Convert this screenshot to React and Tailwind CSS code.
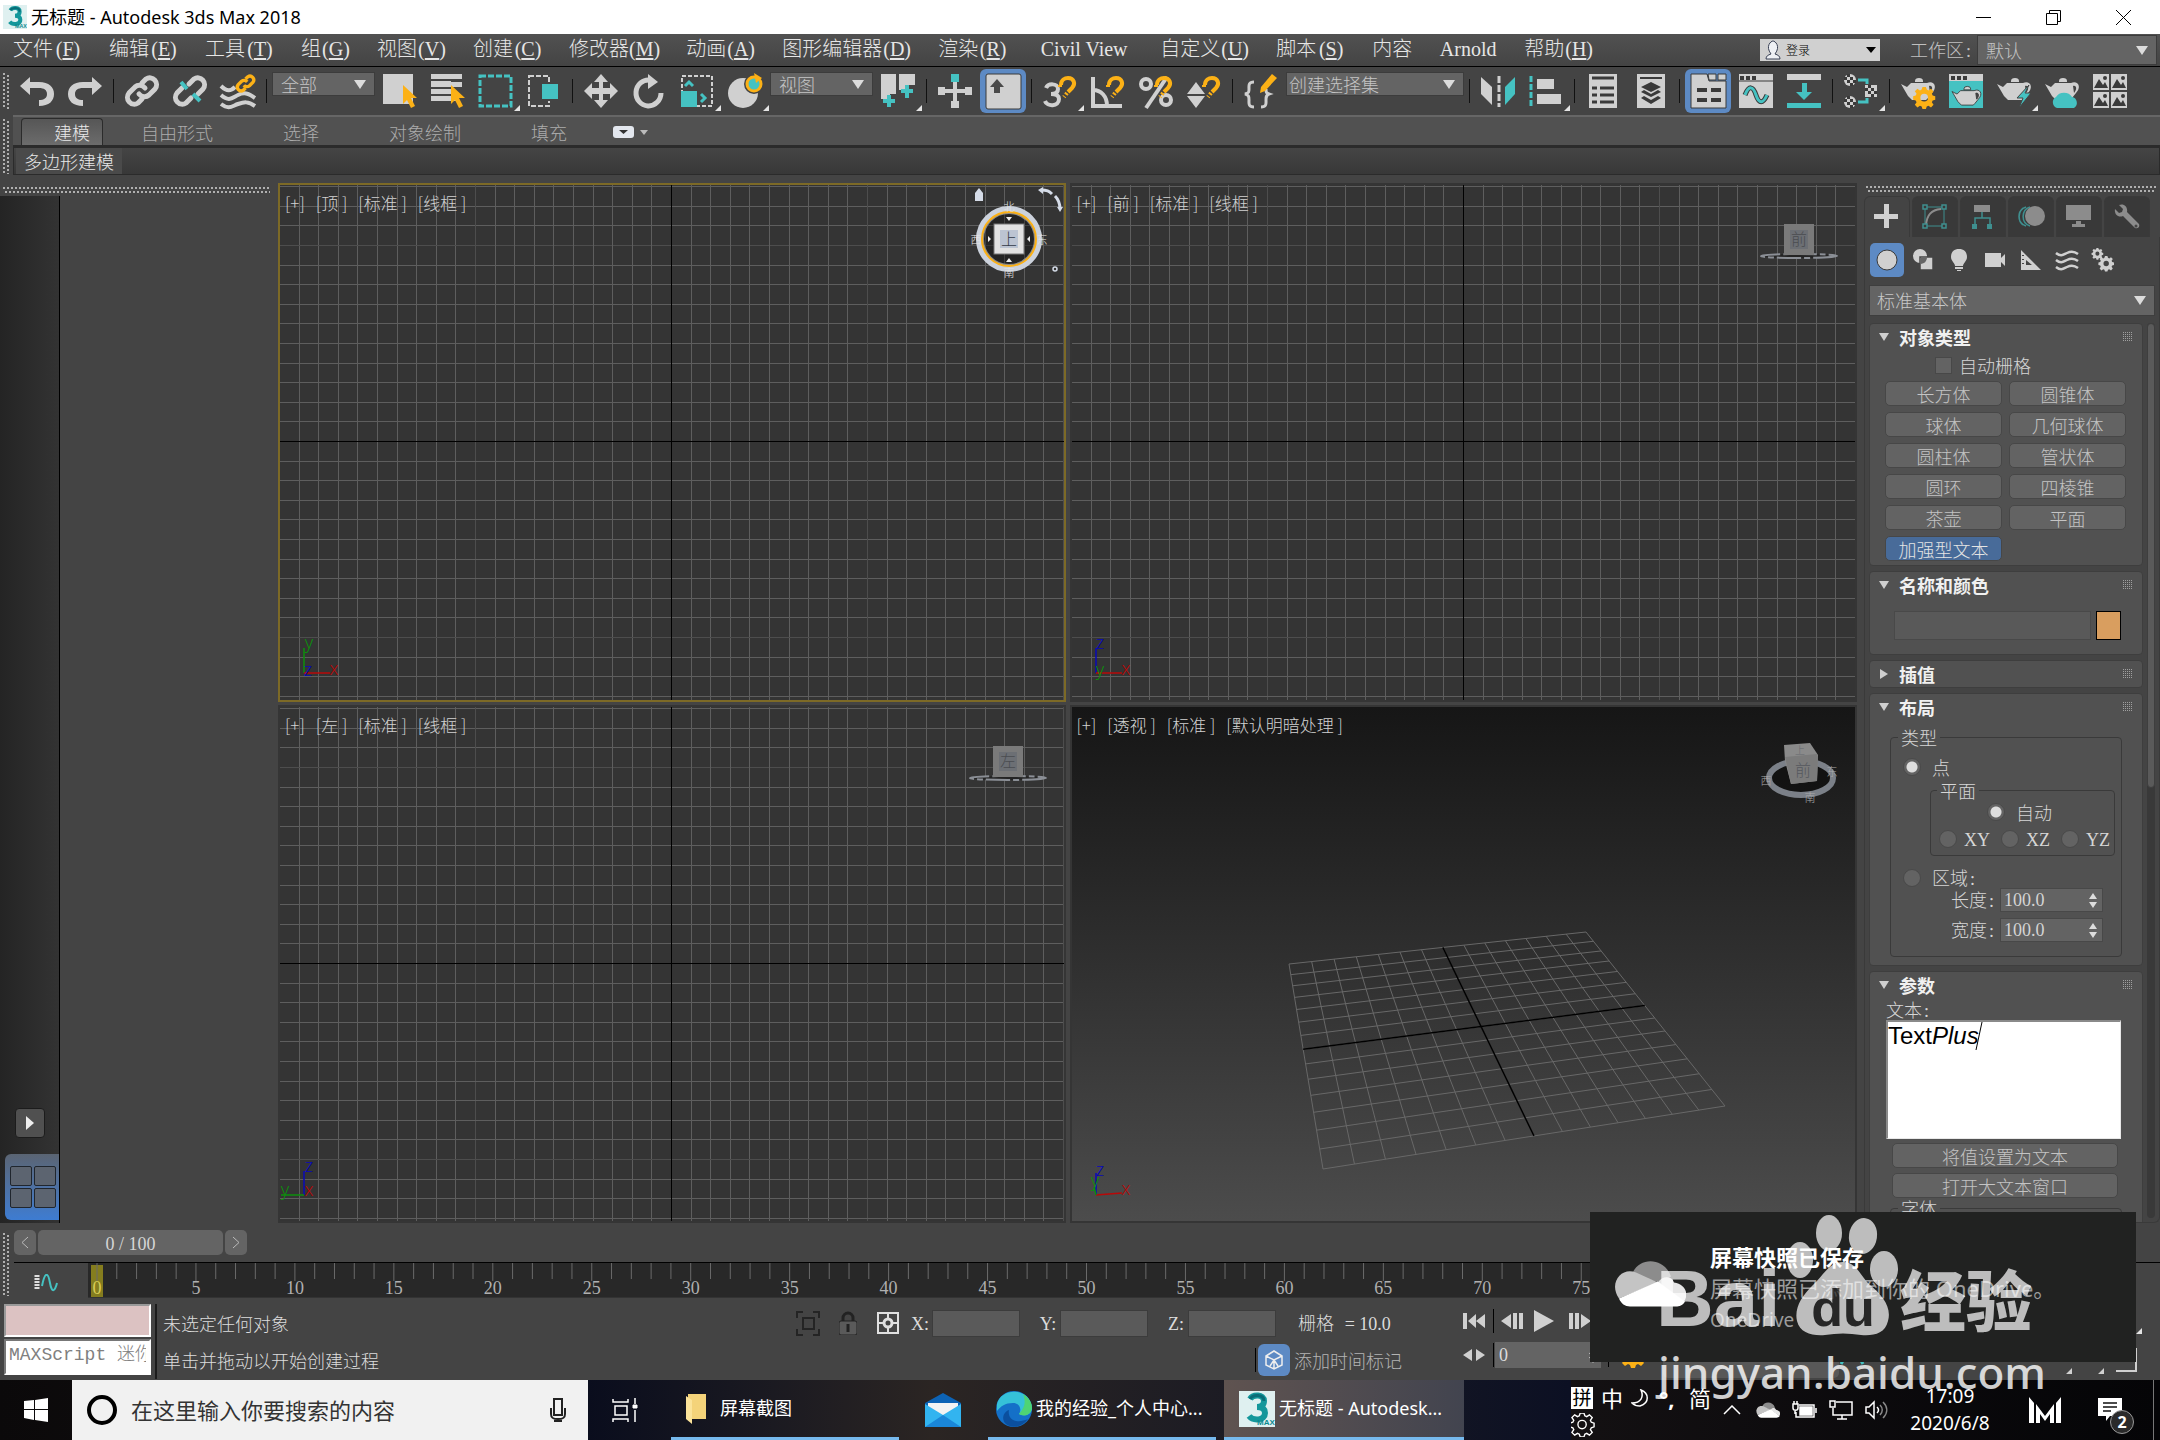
import React from "react";

const G = "#d0d0d0";
const T = "#45c2c2";
const O = "#fcb116";
const D = "#3a3a3a";

/* Latin runs are set in a serif face on half-width cells beside the Chinese text. */
function Song({ children, large, underline }) {
  const runs = String(children).match(/[\x20-\x7e]+|[^\x20-\x7e]+/g) || [];
  return runs.map((r, i) =>
    /^[\x20-\x7e]/.test(r) ? (
      <span
        key={i}
        className="inline-block text-center whitespace-pre font-['Liberation_Serif',serif]"
        style={{ minWidth: r.length * (large ? 10 : 9) }}
      >
        {underline && /^\(.\)$/.test(r) ? (
          <>
            (<u className="underline underline-offset-2">{r[1]}</u>)
          </>
        ) : (
          r
        )}
      </span>
    ) : (
      <span key={i}>{r}</span>
    )
  );
}

function Svg({ s = 34, vb, children, ...rest }) {
  return (
    <svg width={s} height={s} viewBox={vb || "0 0 34 34"} fill={G} aria-hidden="true" {...rest}>
      {children}
    </svg>
  );
}

/* ---------- toolbar drawings ---------- */
const undoPath = "M0 12 10 3v5h9c10 0 15 5 15 12s-5 12-15 12v-6c5 0 8-2 8-6s-3-6-8-6h-9v7z";
const chainA = "M14 20a7 7 0 0 0 10 1l6-6a6.800 6.800 0 0 0-9-10l-4 4";
const chainB = "M20 14a7 7 0 0 0-10-1l-6 6a6.800 6.800 0 0 0 9 10l4-4";
const cursor = "M0 0v19l4-4 4 8 4-2-4-8h6z";

const Magnet = ({ x = 15, y = 2 }) => (
  <g transform={`translate(${x} ${y})`} fill="none" stroke={O} strokeWidth="4">
    <path d="M3 9C3 4 7 2 10 2c6 0 8 6 4 10l-4 4" />
    <path d="M2 9v4M9 17l-3 4" strokeWidth="4" strokeDasharray="2 2" />
  </g>
);
const Pot = ({ children }) => (
  <>
    <path d="M14 7a4 3 0 0 1 8 0v1h-8zM0 10l6 3 4-4h16c7-3 11 4 5 10l-4 5-2 2H11L7 22z" />
    <path d="M28 12c4-1 4 4 1 7z" fill="#444" />
    {children}
  </>
);
const Mountain = ({ x, y }) => (
  <g transform={`translate(${x} ${y})`}>
    <rect width="16" height="16" />
    <path d="m1 14 5-9 4 6 2-3 3 6z" fill={D} />
    <circle cx="12" cy="4" r="2" fill={D} />
  </g>
);
const Checker = ({ x, y, round }) => (
  <g transform={`translate(${x} ${y})`}>
    {round ? <circle cx="6" cy="6" r="6" /> : <rect width="12" height="12" />}
    <path d="M3 0h3v3H3zM0 3h3v3H0zM6 3h3v3H6zM3 6h3v3H3zM9 6h3v3H9zM6 9h3v3H6z" fill={D} />
  </g>
);
const gearPath =
  "M10 0h4l1 3 2 1 3-2 3 3-2 3 1 2 3 1v4l-3 1-1 2 2 3-3 3-3-2-2 1-1 3h-4l-1-3-2-1-3 2-3-3 2-3-1-2-3-1v-4l3-1 1-2-2-3 3-3 3 2 2-1zM12 8a4 4 0 1 0 0 9 4 4 0 0 0 0-9z";

const icons = {
  undo: <path d={undoPath} />,
  redo: <path d={undoPath} transform="matrix(-1 0 0 1 34 0)" />,
  link: (
    <g fill="none" stroke={G} strokeWidth="5" strokeLinecap="round">
      <path d={chainA} />
      <path d={chainB} />
    </g>
  ),
  unlink: (
    <g fill="none" stroke={G} strokeWidth="5" strokeLinecap="round">
      <path d="M25 20l5-5a6.800 6.800 0 0 0-9-10l-5 5" />
      <path d="M9 14l-5 5a6.800 6.800 0 0 0 9 10l5-5" />
      <path d="m8 8 6 7M20 20l7 7" stroke={T} strokeWidth="4" strokeLinecap="butt" />
    </g>
  ),
  bind: (
    <g fill="none" stroke={G} strokeWidth="4">
      <path d="M0 12c6 6 10 5 14 1M0 21c8 7 11 3 17 0s10-2 17 3M0 30c8 6 11 2 17 0s10-3 17 2" />
      <g stroke={O} transform="translate(15 0) scale(.56)">
        <path d={chainA} strokeWidth="6" />
        <path d={chainB} strokeWidth="6" />
      </g>
    </g>
  ),
  select: (
    <>
      <path d="M0 0h30v30H0z" />
      <path d={cursor} fill={O} transform="translate(20 11)" />
    </>
  ),
  byName: (
    <>
      <path d="M0 0h31v5H0zM0 7h20v6H0zM20 8h11v5H20zM0 15h21v5H0zM0 22h27v5H0z" />
      <path d={cursor} fill={O} transform="translate(20 11)" />
    </>
  ),
  rect: <rect x="1" y="2" width="31" height="30" fill="none" stroke={T} strokeWidth="3" strokeDasharray="6 2" />,
  crossing: (
    <>
      <rect x="2" y="2" width="20" height="30" fill="none" stroke={G} strokeWidth="2" strokeDasharray="5 2" />
      <rect x="14" y="9" width="18" height="17" fill={T} stroke="#444" strokeWidth="2" />
    </>
  ),
  move: <path d="m17 0 7 8h-5v6h7V9l8 8-8 8v-5h-7v6h5l-7 8-7-8h5v-6H8v5l-8-8 8-8v5h7V8h-5z" />,
  rotate: (
    <>
      <path d="M18 6A12.500 13 0 1 0 29 19" fill="none" stroke={G} strokeWidth="5" />
      <path d="m16 0 10 8-10 7z" />
    </>
  ),
  scale: (
    <>
      <rect x="2" y="2" width="30" height="30" fill="none" stroke={G} strokeWidth="2" strokeDasharray="4 2" />
      <rect x="1" y="17" width="16" height="16" fill={T} />
      <path d="m5 12 4-4 4 4M21 20l4 4-4 4" fill="none" stroke={T} strokeWidth="3" />
    </>
  ),
  place: (
    <>
      <circle cx="15" cy="19" r="15" />
      <circle cx="26" cy="10" r="7" fill={T} stroke="#444" strokeWidth="6" />
      <circle cx="26" cy="10" r="7" fill={T} stroke={O} strokeWidth="3" />
      <path d="m26 -1 8 5-6 5z" fill={O} />
    </>
  ),
  pivot: (
    <>
      <path d="M0 0h15v20H9v5H0zM18 0h16v11h-8v5h-8z" />
      <path d="M8 21v12M2 27h12M26 11v13M20 17h12" stroke={T} strokeWidth="4" />
    </>
  ),
  manip: (
    <>
      <path d="M15 8h4v7h8v-2h7v8h-7v-2h-8v8h2v7h-8v-7h2v-8H7v2H0v-8h7v2h8z" />
      <rect x="13" y="0" width="8" height="8" fill={T} />
    </>
  ),
  keyb: (
    <>
      <rect x="0" y="0" width="35" height="35" rx="2" stroke="#3a3a3a" />
      <path d="m11 5 7 8h-4v6H8v-6H4z" fill="#4a4a4a" />
    </>
  ),
  snap3: (
    <>
      <path d="M3 14c2-5 12-5 12 1 0 4-3 5-7 5 4 0 8 1 8 5 0 8-12 8-14 2" fill="none" stroke={G} strokeWidth="4" />
      <Magnet />
    </>
  ),
  angle: (
    <>
      <path d="M2 3v29h29M2 16c8 0 14 6 14 16" fill="none" stroke={G} strokeWidth="4" />
      <Magnet />
    </>
  ),
  percent: (
    <>
      <g fill="none" stroke={G} strokeWidth="4">
        <circle cx="7" cy="10" r="5" />
        <circle cx="27" cy="26" r="5" />
        <path d="M28 3 7 34" />
      </g>
      <Magnet />
    </>
  ),
  spin: (
    <>
      <path d="m9 8 9 12H0zM9 34l9-12H0z" />
      <Magnet />
    </>
  ),
  sets: (
    <>
      <path d="M10 8c-6 0-5 4-5 7s0 4-4 5c4 1 4 3 4 6s-1 7 5 7M17 33c6 0 5-4 5-7s0-5 3-6c-3-1-3-2-3-5" fill="none" stroke={G} strokeWidth="3" />
      <path d="M28 0l5 4-12 13-5 2 1-6z" fill={O} />
    </>
  ),
  mirror: (
    <>
      <path d="M0 3l11 10v18L0 20z" />
      <path d="M34 3 24 13v18l10-11z" fill={T} />
      <path d="M18 2v31" stroke={G} strokeWidth="3" strokeDasharray="7 2" />
    </>
  ),
  align: (
    <>
      <path d="M8 5h17v10H8zM8 20h24v10H8z" />
      <path d="M2 2v31" stroke={T} strokeWidth="3" strokeDasharray="6 2" />
    </>
  ),
  explorer: (
    <>
      <path d="M3 0h28v34H3z" />
      <path d="M6 4h22M6 14h5M14 14h14M6 21h5M14 21h14M6 28h5M14 28h14" stroke={D} strokeWidth="3" />
    </>
  ),
  layers: (
    <>
      <path d="M3 0h28v34H3z" />
      <path d="M6 4h22" stroke={D} strokeWidth="2" />
      <path d="m17 8 10 5-10 5-10-5zM17 20l7-4 3 2-10 5-10-5 3-2zM17 26l7-4 3 2-10 6-10-6 3-2z" fill={D} />
    </>
  ),
  ribbon: (
    <>
      <path d="M0 0h16l2 7h17v27H0z" stroke={D} />
      <path d="M17 0h8v6h-7zM27 0h8v6h-8z" stroke={D} />
      <path d="M6 16h10M20 16h10M6 26h10M20 26h10" stroke={D} strokeWidth="4" />
    </>
  ),
  curve: (
    <>
      <path d="M0 0h34v34H0z" />
      <path d="M0 7h34" stroke={D} />
      <path d="M1 2h4v4H1zM7 2h4v4H7zM13 2h4v4h-4z" fill={D} />
      <path d="M6 21c4-10 8-9 11 0s7 9 11 0" fill="none" stroke={D} strokeWidth="5" />
      <path d="M6 21c4-10 8-9 11 0s7 9 11 0" fill="none" stroke={T} strokeWidth="3" />
    </>
  ),
  schematic: (
    <>
      <path d="M0 0h34v6H0z" />
      <path d="M0 29h34v5H0zM15 9h5v9h5l-8 8-8-8h6z" fill={T} />
    </>
  ),
  material: (
    <>
      <Checker x="0" y="0" round />
      <Checker x="0" y="22" round />
      <Checker x="21" y="11" />
      <path d="M14 6h9v4M14 28h9v-4" fill="none" stroke={T} strokeWidth="3" />
    </>
  ),
  renderSetup: (
    <Pot>
      <path d={gearPath} fill={O} fillRule="evenodd" transform="translate(13 13) scale(.85)" />
    </Pot>
  ),
  frame: (
    <>
      <path d="M0 0h34v34H0z" fill={T} />
      <path d="M0 0h34v7H0z" />
      <path d="M2 2h4v4H2zM8 2h4v4H8zM14 2h4v4h-4z" fill={D} />
      <g transform="translate(3 9) scale(.85)" stroke={D}>
        <Pot />
      </g>
    </>
  ),
  render: (
    <Pot>
      <path d="m32 11-12 13h6l-4 10 12-15h-6z" fill={T} stroke="#444" />
    </Pot>
  ),
  cloud: (
    <Pot>
      <path d="M12 34a6 6 0 0 1-1-11 9 8 0 0 1 16 0 6 6 0 0 1 2 11z" fill={T} />
    </Pot>
  ),
  gallery: (
    <>
      <Mountain x="0" y="0" />
      <Mountain x="18" y="0" />
      <Mountain x="0" y="18" />
      <Mountain x="18" y="18" />
    </>
  ),
};

function Tool({ name, label, active, more }) {
  return (
    <button aria-label={label} className="relative flex h-12 w-12 shrink-0 items-center justify-center">
      <span
        className={
          active
            ? "flex h-11 w-[46px] items-center justify-center rounded-md bg-[#5d8ac4]"
            : "flex h-11 w-[46px] items-center justify-center"
        }
      >
        <Svg overflow="visible">{icons[name]}</Svg>
      </span>
      {more && (
        <svg className="absolute right-0 bottom-1" width="6" height="6" fill="#e4e4e4" aria-hidden="true">
          <path d="M6 0v6H0z" />
        </svg>
      )}
    </button>
  );
}

const Sep = () => (
  <span className="flex h-12 w-[9px] shrink-0 items-center justify-center">
    <span className="h-6 w-px bg-[#111]" />
  </span>
);

function Combo({ label, value, className, arrowClass }) {
  return (
    <span className={"relative flex shrink-0 items-center " + className}>
      <select aria-label={label} className="h-full w-full appearance-none bg-transparent outline-none" defaultValue={value}>
        <option>{value}</option>
      </select>
      <svg className={"pointer-events-none absolute " + (arrowClass || "right-2")} width="12" height="9" fill="#dcdcdc" aria-hidden="true">
        <path d="M0 0h12L6 9z" />
      </svg>
    </span>
  );
}

const toolbarCombo = "mx-px mt-[5px] h-6 self-start border border-[#3c3c3c] bg-[#646464] text-[18px] leading-[22px] text-[#c4c4c4]";

function GripV({ className }) {
  return (
    <span className={"flex w-[7px] shrink-0 gap-px " + className} aria-hidden="true">
      <span className="w-[2px] bg-[repeating-linear-gradient(180deg,#b0b0b0_0_2px,transparent_2px_4px)]" />
      <span className="mt-[2px] ml-px w-[2px] bg-[repeating-linear-gradient(180deg,#b0b0b0_0_2px,transparent_2px_4px)]" />
    </span>
  );
}
function GripH({ className }) {
  return (
    <span className={"flex flex-col gap-[2px] " + className} aria-hidden="true">
      <span className="h-[2px] bg-[repeating-linear-gradient(90deg,#b0b0b0_0_2px,transparent_2px_4px)]" />
      <span className="ml-[2px] h-[2px] bg-[repeating-linear-gradient(90deg,#b0b0b0_0_2px,transparent_2px_4px)]" />
    </span>
  );
}

function MaxLogo({ className }) {
  return (
    <svg viewBox="0 0 36 36" className={className} aria-hidden="true">
      <rect width="36" height="36" fill="#dff0f0" />
      <path d="M11 8c3-5 14-5 14 2 0 4-3 6-7 6 5 0 8 2 8 6 0 8-12 8-16 3" fill="none" stroke="#14979b" strokeWidth="6" />
      <path d="M11 8c3-5 14-5 14 2" fill="none" stroke="#0a6d78" strokeWidth="3" />
      <text x="18" y="34" fontSize="8" fontWeight="700" fill="#0a8a90" fontFamily="Liberation Sans, sans-serif">
        MAX
      </text>
    </svg>
  );
}

/* ---------- header ---------- */
function TitleBar() {
  return (
    <header className="flex h-[34px] items-center bg-white pl-[3px] text-black">
      <MaxLogo className="h-6 w-6" />
      <h1 className="ml-1 flex-1 font-['Noto_Sans','Noto_Sans_CJK_SC',sans-serif] text-[18px] leading-6 font-normal">无标题 - Autodesk 3ds Max 2018</h1>
      <button aria-label="最小化" className="flex h-full w-[70px] items-center justify-center">
        <svg width="15" height="15" stroke="#000"><path d="M0 7.500h15" /></svg>
      </button>
      <button aria-label="还原" className="flex h-full w-[70px] items-center justify-center">
        <svg width="15" height="15" stroke="#000" fill="none"><path d="M.5 3.500h11v11H.5zM3.500 3V.5h11v11H12" /></svg>
      </button>
      <button aria-label="关闭" className="mr-[2px] flex h-full w-[70px] items-center justify-center">
        <svg width="15" height="15" stroke="#000"><path d="m0 0 15 15M15 0 0 15" /></svg>
      </button>
    </header>
  );
}

const menus = [
  "文件(F)", "编辑(E)", "工具(T)", "组(G)", "视图(V)", "创建(C)", "修改器(M)", "动画(A)", "图形编辑器(D)",
  "渲染(R)", "Civil View", "自定义(U)", "脚本(S)", "内容", "Arnold", "帮助(H)",
];

function MenuBar() {
  return (
    <nav className="flex h-[33px] items-center border-b border-black bg-linear-to-b from-[#515151] to-[#444] text-[20px] text-[#e6e6e6]">
      <div className="flex">
        {menus.map((m) => (
          <button key={m} className="px-[13px] pb-1 leading-7 whitespace-nowrap">
            <Song large underline>{m}</Song>
          </button>
        ))}
      </div>
      <span className="flex-1" />
      <button className="flex h-[22px] w-[120px] items-center bg-[#d0d0d0] px-1 text-[12px] text-black">
        <svg width="18" height="20" viewBox="0 0 18 20" fill="#eef0f4" stroke="#3b4256" aria-hidden="true">
          <path d="M2 19c0-3 2-4 5-5-6-8 0-13 2-13s8 5 2 13c3 1 5 2 5 5z" />
        </svg>
        <span className="ml-1 flex-1 text-left">登录</span>
        <svg width="10" height="6" aria-hidden="true"><path d="M0 0h10L5 6z" /></svg>
      </button>
      <span className="ml-[30px] text-[18px] text-[#c0c0c0]"><Song>工作区:</Song></span>
      <Combo label="工作区" value="默认" className="mr-[3px] ml-1 h-[30px] w-[180px] border border-[#3c3c3c] bg-[#646464] pl-2 text-[18px] text-[#c4c4c4]" />
    </nav>
  );
}

function ToolBar() {
  return (
    <div className="flex h-12 items-center bg-[#444] pl-[3px]">
      <GripV className="mr-[3px] h-9" />
      <Tool name="undo" label="撤消" />
      <Tool name="redo" label="重做" />
      <Sep />
      <Tool name="link" label="选择并链接" />
      <Tool name="unlink" label="取消链接" />
      <Tool name="bind" label="绑定到空间扭曲" />
      <Sep />
      <Combo label="选择过滤器" value="全部" className={toolbarCombo + " w-[103px] pl-2"} />
      <Tool name="select" label="选择对象" />
      <Tool name="byName" label="按名称选择" />
      <Tool name="rect" label="矩形选择区域" more />
      <Tool name="crossing" label="窗口/交叉" />
      <Sep />
      <Tool name="move" label="移动" />
      <Tool name="rotate" label="旋转" />
      <Tool name="scale" label="缩放" more />
      <Tool name="place" label="放置" more />
      <Combo label="参考坐标系" value="视图" className={toolbarCombo + " w-[103px] pl-2"} />
      <Tool name="pivot" label="使用轴点中心" more />
      <Sep />
      <Tool name="manip" label="选择并操纵" />
      <Tool name="keyb" label="键盘快捷键覆盖" active />
      <Sep />
      <Tool name="snap3" label="捕捉开关" more />
      <Tool name="angle" label="角度捕捉" />
      <Tool name="percent" label="百分比捕捉" />
      <Tool name="spin" label="微调器捕捉" />
      <Sep />
      <Tool name="sets" label="编辑命名选择集" />
      <Combo label="命名选择集" value="创建选择集" className={toolbarCombo + " w-[178px] pl-[2px]"} />
      <Sep />
      <Tool name="mirror" label="镜像" />
      <Tool name="align" label="对齐" more />
      <Sep />
      <Tool name="explorer" label="场景资源管理器" />
      <Tool name="layers" label="层资源管理器" />
      <Sep />
      <Tool name="ribbon" label="切换功能区" active />
      <Tool name="curve" label="曲线编辑器" />
      <Tool name="schematic" label="图解视图" />
      <Sep />
      <Tool name="material" label="材质编辑器" more />
      <Sep />
      <Tool name="renderSetup" label="渲染设置" />
      <Tool name="frame" label="渲染帧窗口" />
      <Tool name="render" label="渲染产品" more />
      <Tool name="cloud" label="在云中渲染" />
      <Tool name="gallery" label="打开 A360 库" />
    </div>
  );
}

function Ribbon() {
  return (
    <div className="flex bg-[#444] pb-2 pl-[3px]">
      <GripV className="mt-1 mr-[3px] mb-px" />
      <div className="min-w-0 flex-1">
        <div className="flex h-8 items-end gap-[70px] border-t-2 border-b-2 border-t-[#666] border-b-[#2b2b2b] bg-[#515151] pl-2 text-[18px] leading-[26px] text-[#acacac]">
          <button className="-mr-8 w-[82px] rounded-t-sm border border-b-0 border-[#2b2b2b] bg-linear-to-b from-[#565656] to-[#6c6c6c] pr-3 text-right text-[#e8e8e8]">
            建模
          </button>
          <button>自由形式</button>
          <button>选择</button>
          <button>对象绘制</button>
          <button>填充</button>
          <button aria-label="显示选项" className="-ml-6 flex h-[26px] items-center gap-1.5">
            <svg width="21" height="12" aria-hidden="true">
              <rect width="21" height="12" rx="3" fill="#e3e7ee" />
              <path d="M6 4h9l-4.500 4z" fill="#333" />
            </svg>
            <svg width="8" height="5" fill="#bbb" aria-hidden="true"><path d="M0 0h8L4 5z" /></svg>
          </button>
        </div>
        <div className="flex h-7 border border-[#2b2b2b] bg-linear-to-b from-[#454545] to-[#383838] pl-[2px]">
          <button className="bg-[#4a4a4a] px-2 text-[18px] leading-6 text-[#e8e8e8]">多边形建模</button>
        </div>
      </div>
    </div>
  );
}

/* ---------- viewports ---------- */
const steps = Array.from({ length: 81 }, (_, i) => i - 40);

function GridLines() {
  return (
    <svg className="absolute inset-0 h-full w-full" aria-hidden="true" shapeRendering="crispEdges">
      <svg x="50%" y="50%" overflow="visible">
        {steps.map((k) => {
          const p = Math.round(k * 19.6);
          const stroke = k % 10 === 0 ? "#4d4d4d" : "#5e5e5e";
          return (
            <g key={k} stroke={stroke} strokeWidth="1">
              <path d={`M${p} -900V900`} />
              <path d={`M-900 ${p - 1}H900`} />
            </g>
          );
        })}
        <path d="M0 -900V900M-900 -1H900" stroke="#000" />
      </svg>
    </svg>
  );
}

/* Projects the unit square onto the ground-plane quadrilateral. */
const quad = [[217, 257], [514, 225], [653, 399], [251, 462]];
function project(u, v) {
  const [[x0, y0], [x1, y1], [x2, y2], [x3, y3]] = quad;
  const sx = x0 - x1 + x2 - x3;
  const sy = y0 - y1 + y2 - y3;
  const dx1 = x1 - x2, dx2 = x3 - x2, dy1 = y1 - y2, dy2 = y3 - y2;
  const det = dx1 * dy2 - dx2 * dy1;
  const g = (sx * dy2 - dx2 * sy) / det;
  const h = (dx1 * sy - sx * dy1) / det;
  const w = g * u + h * v + 1;
  return [
    ((x1 - x0 + g * x1) * u + (x3 - x0 + h * x3) * v + x0) / w,
    ((y1 - y0 + g * y1) * u + (y3 - y0 + h * y3) * v + y0) / w,
  ].join(" ");
}
const cells = Array.from({ length: 15 }, (_, i) => i);

function PerspectiveGrid() {
  return (
    <svg className="absolute inset-0 h-full w-full" aria-hidden="true" fill="none">
      {cells.map((i) => (
        <path key={i} stroke="#686868" d={`M${project(i / 14, 0)}L${project(i / 14, 1)}M${project(0, i / 14)}L${project(1, i / 14)}`} />
      ))}
      <path stroke="#000" strokeWidth="1.500" d={`M${project(0.5, 0)}L${project(0.5, 1)}M${project(0, 0.5)}L${project(1, 0.5)}`} />
    </svg>
  );
}

const blue = "#0808b8", green = "#0c8f0c", red = "#b80808";
const tripods = {
  top: { lines: [["M24 18v25", green], ["M24 43h26", red]], t: [["y", 29, 19, green], ["z", 28, 46, blue], ["x", 54, 45, red]] },
  front: { lines: [["M24 18v25", blue], ["M24 43h26", red]], t: [["z", 28, 19, blue], ["y", 28, 46, green], ["x", 54, 45, red]] },
  left: { lines: [["M24 20v24", blue], ["M1 44h23", green]], t: [["z", 29, 21, blue], ["y", 5, 45, green], ["x", 29, 45, red]] },
  persp: { lines: [["M24 22v22", blue], ["M24 44l26-2", red], ["M24 44l-2-8", green]], t: [["z", 28, 25, blue], ["y", 23, 36, green], ["x", 54, 44, red]] },
};

function Tripod({ kind }) {
  const d = tripods[kind];
  return (
    <svg className="absolute bottom-0 left-0" width="70" height="70" overflow="visible" aria-hidden="true" fontFamily="Noto Sans, sans-serif" fontSize="18" textAnchor="middle">
      {d.lines.map(([p, c]) => <path key={p} d={p} stroke={c} fill="none" strokeWidth="1.500" />)}
      {d.t.map(([s, x, y, c]) => <text key={s} x={x} y={y} fill={c}>{s}</text>)}
    </svg>
  );
}

function TopCube() {
  return (
    <svg className="absolute top-0 right-0" width="100" height="100" viewBox="1 0 100 100" aria-hidden="true" fontSize="11" textAnchor="middle" fill="#e6e6e6" fontFamily="Noto Sans CJK SC, sans-serif">
      <path d="M12 8l4-5 4 5v8h-8z" fill="#d5dce8" />
      <path d="M78 5c6 0 8 1 11 4M92 11c4 4 5 8 5 13" stroke="#d5dce8" strokeWidth="3" fill="none" />
      <path d="M80 2v7l-5-4zM94 22h6l-3 5z" fill="#d5dce8" />
      <circle cx="92" cy="84" r="2" fill="none" stroke="#d5dce8" strokeWidth="1.500" />
      <circle cx="46" cy="54" r="26" fill="#000" fillOpacity=".3" stroke="#8a8a8a" strokeWidth="2" />
      <circle cx="46" cy="54" r="30" fill="none" stroke="#ccd2dc" strokeWidth="6" />
      <circle cx="46" cy="54" r="27" fill="none" stroke={O} strokeWidth="2" />
      <path d="M46 36l-3-4h6zM46 73l-3 4h6zM28 54l-3-3v6zM64 54l3-3v6z" fill="#eee" />
      <rect x="31" y="39" width="30" height="30" fill="#e2e2e2" stroke="#777" />
      <rect x="37" y="45" width="18" height="18" fill="#bcc4d2" />
      <text x="46" y="60" fontSize="16" fill="#333a48">上</text>
      <text x="46" y="26">北</text>
      <text x="46" y="92">南</text>
      <text x="13" y="59">西</text>
      <text x="79" y="59">东</text>
    </svg>
  );
}

function SideCube({ label }) {
  return (
    <svg className="absolute top-0 right-0" width="100" height="100" viewBox="0 0 100 100" aria-hidden="true">
      <ellipse cx="44" cy="71" rx="38" ry="2" fill="#242424" stroke="#8b8f96" strokeWidth="2" strokeDasharray="24 3 6 3" />
      <rect x="29" y="39" width="30" height="31" fill="#7a7a7a" />
      <rect x="35" y="45" width="18" height="19" fill="#6c6f74" />
      <text x="44" y="60" fontSize="16" textAnchor="middle" fill="#4a4c50" fontFamily="Noto Sans CJK SC, sans-serif">{label}</text>
    </svg>
  );
}

function PerspCube() {
  return (
    <svg className="absolute top-0 right-0" width="100" height="100" viewBox="0 0 100 100" aria-hidden="true" fontFamily="Noto Sans CJK SC, sans-serif" textAnchor="middle">
      <ellipse cx="46" cy="71" rx="32" ry="17" fill="#000" fillOpacity=".35" stroke="#7b8088" strokeWidth="6" />
      <path d="M29 38l26-2 8 12-1 26-26 3-6-23z" fill="#8a8a8a" />
      <path d="M30 50l32-3 1 4-1 23-26 3z" fill="#7b7b7b" />
      <text x="48" y="69" fontSize="16" fill="#55585e">前</text>
      <text x="45" y="47" fontSize="10" fill="#66696e">上</text>
      <text x="11" y="78" fontSize="11" fill="#aaa">西</text>
      <text x="77" y="69" fontSize="11" fill="#aaa">东</text>
      <text x="55" y="95" fontSize="11" fill="#aaa">南</text>
    </svg>
  );
}

function Viewport({ labels, kind, cube, active, persp }) {
  return (
    <section
      className={
        "relative min-h-0 overflow-hidden border-2 " +
        (active ? "border-[#7d6a26] " : "border-[#353535] ") +
        (persp ? "bg-linear-to-b from-[#161616] to-[#4c4c4c]" : "bg-[#343434]")
      }
    >
      {persp ? <PerspectiveGrid /> : <GridLines />}
      <div className="relative flex gap-[11px] pt-[5px] pl-[5px] text-[17px] leading-[26px] text-[#d2d2d2]">
        {labels.map((l) => <button key={l}>[{l}]</button>)}
      </div>
      {cube}
      <Tripod kind={kind} />
    </section>
  );
}

function Dock() {
  return (
    <aside className="flex w-[278px] shrink-0 flex-col pt-1">
      <GripH className="mr-2 mb-[3px] ml-[3px]" />
      <div className="flex w-[60px] flex-1 flex-col border-r border-black bg-linear-to-r from-[#242424] to-[#333] pb-[3px]">
        <span className="flex-1" />
        <button aria-label="展开" className="ml-[15px] flex h-[30px] w-[30px] items-center justify-center rounded-sm border border-[#1c1c1c] bg-[#505050]">
          <svg width="8" height="14" fill="#eee" aria-hidden="true"><path d="M0 0v14l8-7z" /></svg>
        </button>
        <button aria-label="视口布局" className="mt-4 ml-[5px] grid h-[66px] grid-cols-2 grid-rows-2 gap-[2px] rounded-l-md bg-linear-to-b from-[#5a6473] to-[#3d7cd2] py-3 pr-[3px] pl-[5px]">
          {[0, 1, 2, 3].map((i) => <span key={i} className="rounded-xs border border-[#20262e] bg-[#5c6470]" />)}
        </button>
      </div>
    </aside>
  );
}

/* ---------- command panel ---------- */
const tabIcons = [
  ["创建", <path key="p" d="M10 0h5v10h9v5h-9v9h-5v-9H0v-5h10z" />],
  ["修改", <g key="m" fill="none"><path d="M3 3h19v19H3z" stroke="#3f8f8f" /><path d="M4 21C5 11 9 6 19 5" stroke="#8c8c8c" strokeWidth="2" /><path d="M1 1h4v4H1zM20 1h4v4h-4zM1 20h4v4H1zM20 20h4v4h-4z" fill="#393939" stroke="#3f8f8f" strokeWidth="1.500" /></g>],
  ["层次", <g key="h"><path d="M4 1h16v7H4z" fill="#8c8c8c" /><path d="M2 20h5v5H2zM17 20h5v5h-5z" fill="#3f8f8f" /><path d="M12 8v6M5 20v-6h15v6" stroke="#3f8f8f" strokeWidth="1.500" fill="none" /></g>],
  ["运动", <g key="r"><path d="M8 3a10 10 0 0 0 0 19M12 3a10 10 0 0 0 0 19M5 4a11 11 0 0 0 0 17" fill="none" stroke="#3f8f8f" strokeWidth="1.500" /><circle cx="17" cy="12" r="10" fill="#8c8c8c" /></g>],
  ["显示", <g key="d" fill="#8c8c8c"><path d="M0 1h25v15H0zM10 17h5v3h4v3H6v-3h4z" /></g>],
  ["实用程序", null],
];
const categories = [
  ["几何体", <circle key="a" cx="12" cy="12" r="10" stroke="#3a3a3a" />],
  ["图形", <g key="b"><circle cx="9" cy="8" r="7" /><path d="M9 9h13v13H9z" stroke="#444" strokeWidth="1.500" /><path d="M10 10h6a7 7 0 0 1-6 6z" fill="#666" /></g>],
  ["灯光", <path key="c" d="M12 1c5 0 8 3 8 8 0 4-4 6-4 9H8c0-3-4-5-4-9 0-5 3-8 8-8zM8 19h8v2H8zM10 22h4v1h-4z" />],
  ["摄影机", <path key="d" d="M2 5h16v14H2zM18 10l4-4v12l-4-4z" />],
  ["辅助对象", <path key="e" fillRule="evenodd" d="M2 2l20 20H2zM7 12v5h6zM3 7h2v1H3zM3 11h2v1H3zM3 15h2v1H3z" />],
  ["空间扭曲", <path key="f" fill="none" stroke={G} strokeWidth="2.500" d="M1 5c5 4 7 2 11 0s7-2 11 1M1 12c5 4 7 2 11 0s7-2 11 1M1 19c5 4 7 2 11 0s7-2 11 1" />],
  ["系统", <g key="g" fillRule="evenodd"><path d={gearPath} transform="translate(1 0) scale(.45)" /><path d={gearPath} transform="translate(8 8) scale(.6)" /></g>],
];

function Rollout({ title, closed, children, className }) {
  return (
    <section className={"rounded-sm border border-[#3e3e3e] bg-[#515151] " + (className || "")}>
      <button className="flex h-[26px] w-full items-center pr-[10px] pl-2 text-[18px] leading-[26px] font-bold text-[#f0f0f0]">
        <svg width="12" height="12" fill="#cfcfcf" aria-hidden="true">
          {closed ? <path d="M2 1v10l8-5z" /> : <path d="M1 2h10L6 10z" />}
        </svg>
        <span className="ml-[9px] flex-1 text-left">{title}</span>
        <span className="h-[10px] w-[10px] bg-[repeating-linear-gradient(90deg,#515151_0_1px,transparent_1px_2px),repeating-linear-gradient(180deg,#a0a0a0_0_1px,#515151_1px_2px)]" aria-hidden="true" />
      </button>
      {children}
    </section>
  );
}

const PanelButton = ({ children, on }) => (
  <button
    className={
      "h-[25px] rounded-[5px] border border-[#474747] text-[18px] leading-[22px] " +
      (on ? "bg-[#486b99] text-[#e4e4e4]" : "bg-[#636363] text-[#c4c4c4]")
    }
  >
    {children}
  </button>
);

function Radio({ name, label, checked, gap = "gap-[11px]" }) {
  return (
    <label className={"flex h-5 items-center leading-5 " + gap}>
      <input
        type="radio"
        name={name}
        defaultChecked={checked}
        className="h-[18px] w-[18px] appearance-none rounded-full border border-[#494949] bg-[#636363] checked:bg-[radial-gradient(circle,#dedede_0_5px,#636363_6px)]"
      />
      <span><Song>{label}</Song></span>
    </label>
  );
}

function Dimension({ label }) {
  return (
    <label className="flex h-6 items-center justify-end gap-1 leading-6">
      <span><Song>{label}</Song></span>
      <span className="flex h-6 w-[103px] items-center border border-[#484848] bg-[#636363] pr-[5px]">
        <input className="h-full w-0 flex-1 bg-transparent pl-[3px] font-['Liberation_Serif',serif] text-[18px] text-[#d4d4d4] outline-none" defaultValue="100.0" />
        <svg width="8" height="16" fill="#ddd" aria-hidden="true"><path d="M0 7h8L4 1zM0 10h8l-4 6z" /></svg>
      </span>
    </label>
  );
}

function CommandPanel() {
  return (
    <aside className="flex w-[303px] shrink-0 flex-col overflow-hidden pt-[3px] pl-[7px]">
      <GripH className="mr-1 ml-[2px]" />
      <div className="mt-1 flex shrink-0 gap-[2px]">
        {tabIcons.map(([name, d], i) => (
          <button
            key={name}
            aria-label={name}
            className={
              "flex h-[41px] w-[46px] items-center justify-center rounded-t-md border border-b-0 " +
              (i === 0 ? "border-[#3a3a3a] bg-[#444]" : "border-[#3a3a3a] bg-[#393939]")
            }
          >
            {name === "实用程序" ? (
              <svg width="26" height="26" viewBox="0 0 26 26" fill="#8c8c8c" aria-hidden="true">
                <path d="M5 1l4 4-1 3-3 1-4-4c-1 5 3 9 8 7l12 12c3 1 5-1 4-4L13 8c1-5-3-9-8-7z" />
                <circle cx="22" cy="22" r="1.500" fill="#444" />
              </svg>
            ) : (
              <Svg s={26} vb="0 0 26 26" overflow="visible">{d}</Svg>
            )}
          </button>
        ))}
      </div>
      <div className="flex min-h-0 flex-1 flex-col rounded-b-md border border-t-0 border-[#3a3a3a] pt-[6px] pl-[5px] text-[18px] text-[#d6d6d6]">
        <div className="flex shrink-0 gap-[2px]">
          {categories.map(([name, d], i) => (
            <button key={name} aria-label={name} className={"flex h-[34px] w-[34px] items-center justify-center rounded-[5px] " + (i === 0 ? "bg-[#5d8ac4]" : "")}>
              <Svg s={24} vb="0 0 24 24">{d}</Svg>
            </button>
          ))}
        </div>
        <Combo label="类别" value="标准基本体" className="mt-2 mr-[4px] -ml-px h-[31px] border border-[#3e3e3e] bg-[#646464] pl-[7px] text-[#c8c8c8]" />
        <div className="mt-[7px] flex min-h-0 flex-1 gap-1">
          <div className="-ml-px flex min-w-0 flex-1 flex-col gap-[5px] overflow-hidden">
            <Rollout title="对象类型" className="shrink-0">
              <label className="mt-1 mb-[5px] flex h-[22px] items-center gap-[7px] pl-[65px] leading-[22px]">
                <input type="checkbox" className="h-[17px] w-[17px] appearance-none border border-[#484848] bg-[#636363]" />
                自动栅格
              </label>
              <div className="mr-[16px] mb-[4px] ml-[15px] grid grid-cols-2 gap-x-[7px] gap-y-[6px]">
                {["长方体", "圆锥体", "球体", "几何球体", "圆柱体", "管状体", "圆环", "四棱锥", "茶壶", "平面"].map((b) => (
                  <PanelButton key={b}>{b}</PanelButton>
                ))}
                <PanelButton on>加强型文本</PanelButton>
              </div>
            </Rollout>
            <Rollout title="名称和颜色" className="shrink-0">
              <div className="mt-[13px] mr-[21px] mb-[14px] ml-6 flex h-[29px] gap-[5px]">
                <input aria-label="名称" className="min-w-0 flex-1 border border-[#494949] bg-[#595959]" />
                <button aria-label="颜色" className="w-[25px] border border-black bg-[#d99e5f]" />
              </div>
            </Rollout>
            <Rollout title="插值" closed className="shrink-0" />
            <Rollout title="布局" className="shrink-0">
              <fieldset className="mx-5 mt-[7px] mb-2 h-[230px] rounded-sm border border-[#3a3a3a]">
                <legend className="ml-[7px] px-[3px] leading-5">类型</legend>
                <div className="mt-[10px] ml-3">
                  <Radio name="type" label="点" checked />
                </div>
                <fieldset className="mt-[3px] mr-[6px] ml-[39px] h-[76px] rounded-sm border border-[#3a3a3a]">
                  <legend className="ml-[6px] px-[3px] leading-5">平面</legend>
                  <div className="mt-[2px] ml-14">
                    <Radio name="plane" label="自动" checked />
                  </div>
                  <div className="mt-[7px] ml-2 flex justify-between pr-1">
                    <Radio name="plane" label="XY" gap="gap-[7px]" />
                    <Radio name="plane" label="XZ" gap="gap-[7px]" />
                    <Radio name="plane" label="YZ" gap="gap-[7px]" />
                  </div>
                </fieldset>
                <div className="mt-3 ml-3">
                  <Radio name="type" label="区域:" />
                </div>
                <div className="mr-[18px] flex flex-col gap-[6px]">
                  <Dimension label="长度:" />
                  <Dimension label="宽度:" />
                </div>
              </fieldset>
            </Rollout>
            <Rollout title="参数" className="shrink-0">
              <div className="ml-4 h-[22px] leading-[22px]"><Song>文本:</Song></div>
              <div
                role="textbox"
                aria-label="文本"
                contentEditable
                suppressContentEditableWarning
                className="mr-[21px] ml-[16px] flex h-[119px] items-start border border-t-2 border-l-2 border-[#e8e8e8] border-t-[#8a8a8a] border-l-[#8a8a8a] bg-white font-['Liberation_Sans',sans-serif] text-[24px] leading-7 text-black outline-none"
              >
                <span>Text</span>
                <i>Plus</i>
                <svg width="8" height="28" className="-ml-1" aria-hidden="true" contentEditable={false}><path d="M7 0 1 28" stroke="#000" /></svg>
              </div>
              <div className="mt-1 mr-[24px] ml-[22px] flex flex-col gap-[5px]">
                <PanelButton>将值设置为文本</PanelButton>
                <PanelButton>打开大文本窗口</PanelButton>
              </div>
              <fieldset className="mx-5 h-24 rounded-sm border border-[#3a3a3a]">
                <legend className="ml-[7px] px-[3px] leading-5">字体</legend>
              </fieldset>
            </Rollout>
          </div>
          <div className="mr-1 mb-1 w-2 rounded-full bg-[#393939]">
            <div className="h-[52%] rounded-full border border-[#3e3e3e] bg-[#5a5a5a]" />
          </div>
        </div>
      </div>
    </aside>
  );
}

/* ---------- time line and status ---------- */
const frames = Array.from({ length: 101 }, (_, i) => i);

function TimeLine() {
  return (
    <div className="flex h-[75px] shrink-0 pl-[3px]">
      <GripV className="mt-[10px] mr-1 mb-[2px]" />
      <div className="flex min-w-0 flex-1 flex-col">
        <div className="flex h-[39px] gap-[2px] pt-[7px]">
          <button aria-label="上一帧" className="flex h-[25px] w-[22px] items-center justify-center rounded-[5px] bg-[#646464]">
            <svg width="8" height="13" fill="none" stroke="#bbb" aria-hidden="true"><path d="M7 1 1 6.500 7 12" /></svg>
          </button>
          <button className="h-[25px] w-[185px] rounded-[5px] bg-[#646464] leading-[25px] text-[#d6d6d6]"><Song>0 / 100</Song></button>
          <button aria-label="下一帧" className="flex h-[25px] w-[22px] items-center justify-center rounded-[5px] bg-[#646464]">
            <svg width="8" height="13" fill="none" stroke="#bbb" aria-hidden="true"><path d="m1 1 6 5.500L1 12" /></svg>
          </button>
        </div>
        <div className="flex h-9 border-t border-black">
          <button aria-label="打开迷你曲线编辑器" className="flex w-[74px] items-center pt-1 pl-5">
            <svg width="24" height="18" fill="none" aria-hidden="true">
              <path d="M3 1v15" stroke="#ddd" strokeWidth="5" strokeDasharray="2 1" />
              <path d="M8 12C11-3 14-2 16 9s5 8 7 0" stroke={T} strokeWidth="2" />
            </svg>
          </button>
          <div className="mr-[75px] flex-1 border-b border-[#333] bg-[#282828] px-[9px]">
            <svg className="h-full w-full overflow-visible" fontFamily="Liberation Serif, serif" fontSize="18" textAnchor="middle" aria-hidden="true">
              <rect x="-6" y="2" width="12" height="32" fill="#857d1e" />
              {frames.map((f) => (
                <line key={f} x1={f + "%"} x2={f + "%"} y1="0" y2={f % 5 === 0 ? 18 : 16} stroke="#6a6a6a" strokeWidth="1" />
              ))}
              {frames.filter((f) => f % 5 === 0).map((f) => (
                <text key={f} x={f + "%"} y="31" fill={f === 0 ? "#d8cc58" : "#b0b0b0"}>{f}</text>
              ))}
            </svg>
          </div>
        </div>
      </div>
    </div>
  );
}

function Axis({ name, className }) {
  return (
    <label className={"flex items-center gap-[3px] " + className}>
      <span><Song>{name + ":"}</Song></span>
      <input className="h-[27px] w-[88px] border border-[#3c3c3c] bg-[#5a5a5a] px-1" />
    </label>
  );
}

const Bar = () => <span className="mr-[6px] ml-[7px] h-6 w-px bg-black" />;

function StatusBar() {
  return (
    <div className="flex h-[82px] shrink-0 pt-[6px] pl-1 text-[18px] leading-6 text-[#dcdcdc]">
      <div className="flex w-[147px] flex-col gap-[2px] pb-[5px]">
        <div className="flex-1 border-2 border-[#999] border-r-white border-b-white bg-[#dcc2c2]" />
        <input
          aria-label="MAXScript"
          className="h-9 w-full border-2 border-[#777] border-r-white border-b-white bg-white px-[3px] pb-[10px] font-['Liberation_Mono','Noto_Sans_CJK_SC',monospace] text-[18px] text-[#808080] outline-none"
          defaultValue="MAXScript 迷你侦听器"
        />
      </div>
      <span className="ml-1 h-[75px] w-[2px] bg-[#1c1c1c]" />
      <div className="flex w-[1305px] flex-col">
        <div className="flex h-[38px] items-center pl-[6px]">
          <span className="w-[633px]">未选定任何对象</span>
          <button aria-label="孤立当前选择">
            <svg width="24" height="25" fill="none" stroke="#242424" strokeWidth="2" aria-hidden="true">
              <path d="M1 7V1h6M17 1h6v6M23 18v6h-6M7 24H1v-6M7 7h11v11H7z" />
            </svg>
          </button>
          <button aria-label="选择锁定" className="ml-[19px]">
            <svg width="18" height="24" aria-hidden="true">
              <path d="M4 11V7a5 5 0 0 1 10 0v4" fill="none" stroke="#222" strokeWidth="3" />
              <rect y="10" width="18" height="14" rx="2" fill="#5a5a5a" stroke="#222" />
              <path d="M9 13v8" stroke="#222" strokeWidth="3" />
            </svg>
          </button>
          <button aria-label="绝对模式变换输入" className="ml-5">
            <svg width="22" height="22" fill="none" stroke="#e0e0e0" strokeWidth="2" aria-hidden="true">
              <path d="M1 1h20v20H1zM11 2v5M11 15v5M2 11h5M15 11h5" />
              <circle cx="11" cy="11" r="4" strokeWidth="3" />
            </svg>
          </button>
          <Axis name="X" className="ml-3" />
          <Axis name="Y" className="ml-[19px]" />
          <Axis name="Z" className="ml-[19px]" />
          <span className="ml-[22px]"><Song>栅格 = 10.0</Song></span>
        </div>
        <div className="flex h-9 items-center pl-[6px]">
          <span className="flex-1">单击并拖动以开始创建过程</span>
          <span className="mr-[2px] h-6 w-px bg-black" />
          <button aria-label="启用" className="flex h-8 w-8 items-center justify-center rounded-md bg-[#5d8ac4]">
            <svg width="20" height="20" fill="none" stroke="#eee" strokeWidth="1.500" aria-hidden="true">
              <path d="m10 1 8 5v9l-8 4-8-4V6zM2 6l8 4 8-4M10 10v9M10 10l-4 6M10 10l4 6" />
            </svg>
          </button>
          <span className="mr-[60px] ml-1 text-[#b4b4b4]">添加时间标记</span>
        </div>
      </div>
      <div className="flex flex-col gap-[6px]">
        <div className="flex h-[34px] items-center">
          <button aria-label="转至开头"><svg width="24" height="18" fill={G} aria-hidden="true"><path d="M1 1h4v16H1zM14 2v14L6 9zM23 2v14l-9-7z" /></svg></button>
          <Bar />
          <button aria-label="上一帧" className="mr-[10px]"><svg width="24" height="18" fill={G} aria-hidden="true"><path d="M11 2v14L1 9zM13 1h4v16h-4zM19 1h4v16h-4z" /></svg></button>
          <button aria-label="播放" className="mr-[14px]"><svg width="20" height="22" fill={G} aria-hidden="true"><path d="M0 0v22l20-11z" /></svg></button>
          <button aria-label="下一帧"><svg width="24" height="18" fill={G} aria-hidden="true"><path d="M1 1h4v16H1zM7 1h4v16H7zM13 2v14l10-7z" /></svg></button>
        </div>
        <div className="flex h-[22px] items-center">
          <button aria-label="关键点模式"><svg width="24" height="14" fill={G} aria-hidden="true"><path d="M10 1v12L1 7zM14 1v12l9-6z" /></svg></button>
          <Bar />
          <span className="-ml-[5px] flex h-[26px] w-[106px] items-center bg-[#646464] pr-1">
            <input aria-label="当前帧" defaultValue="0" className="w-0 flex-1 bg-transparent pl-1 font-['Liberation_Serif',serif] text-[18px] outline-none" />
            <svg width="8" height="16" fill="#ddd" aria-hidden="true"><path d="M0 7h8L4 1zM0 10h8l-4 6z" /></svg>
          </span>
          <Bar />
          <svg width="26" height="26" viewBox="0 0 26 26" className="ml-[6px]" fill={O} fillRule="evenodd" aria-hidden="true"><path d={gearPath} /></svg>
          <span className="ml-4 mt-4 h-[30px] w-[176px] rounded-[5px] bg-[#585858]" />
          <svg width="26" height="22" fill="none" stroke={T} strokeWidth="3" className="self-end" aria-hidden="true"><path d="M2 20C7 10 19 10 24 20" /></svg>
        </div>
      </div>
      <span className="flex-1" />
      <div className="flex flex-col items-end gap-3 pr-[18px]" aria-hidden="true">
        <svg width="12" height="32"><path d="M0 10h6v12H0z" fill={T} /><path d="M12 24v6H6z" fill="#e4e4e4" /></svg>
        <svg width="110" height="26" fill="none" stroke={G} strokeWidth="2"><path d="M84 1h20v22H84" /><path d="M40 26h-6l6-6zM72 26h-6l6-6z" fill={G} stroke="none" /></svg>
      </div>
    </div>
  );
}

/* ---------- desktop task bar ---------- */
function CloudMark({ w, h }) {
  return (
    <svg width={w} height={h} viewBox="0 0 72 46" aria-hidden="true">
      <path d="M18 14C24-4 50-4 57 16l-12 6z" fill="#8c8c8c" />
      <path d="M5 38C-6 22 8 6 22 12l22 10z" fill="#c4c4c4" />
      <path d="M44 22c4-7 14-7 16 0 12 2 15 12 10 19z" fill="#e6e6e6" />
      <path d="M5 38l39-17 27 20c-2 4-6 5-9 5H16c-5 0-9-3-11-8z" fill="#fff" />
    </svg>
  );
}

function Task({ icon, children, className, underline = true }) {
  return (
    <button className={"flex h-full shrink-0 items-center overflow-hidden text-[18px] whitespace-nowrap text-white " + (underline ? "border-b-[3px] border-[#76b9ed] " : "") + className}>
      {icon}
      {children}
    </button>
  );
}

function TaskBar() {
  return (
    <footer className="flex h-[60px] shrink-0 items-stretch bg-linear-to-r from-[#0b090a] via-[#231d1e] via-[48%] to-[#050507] font-['Noto_Sans','Noto_Sans_CJK_SC',sans-serif] font-normal">
      <button aria-label="开始" className="flex w-[72px] items-center justify-center">
        <svg width="24" height="24" fill="#fff" aria-hidden="true"><path d="M0 3l10-1v9H0zM11 2l13-2v11H11zM0 12h10v10L0 20zM11 12h13v12l-13-2z" /></svg>
      </button>
      <label className="flex w-[516px] items-center bg-[#f1f1f1] pr-[22px] pl-[14px]">
        <svg width="32" height="32" fill="none" stroke="#000" aria-hidden="true"><circle cx="16" cy="16" r="13" strokeWidth="4" /></svg>
        <input aria-label="搜索" className="ml-[13px] w-0 flex-1 bg-transparent text-[22px] text-[#333] outline-none placeholder:text-[#333]" placeholder="在这里输入你要搜索的内容" />
        <svg width="16" height="24" fill="none" stroke="#222" strokeWidth="2" aria-hidden="true"><path d="M4 1h8v16H4zM1 10v6c0 4 2 5 7 5s7-1 7-5v-6M8 21v3M4 23h8" /></svg>
      </label>
      <div className="flex flex-1 bg-linear-to-r from-[#0a0d1d] via-[#2b2523] via-35% to-[#0c1023]">
        <button aria-label="任务视图" className="flex w-[83px] items-center pl-6">
          <svg width="26" height="24" fill="none" stroke="#fff" aria-hidden="true"><path d="M1 1v3h15V1M3 8h12v9H3zM1 24v-3h15v3M23 0v6M23 12v12" strokeWidth="1.500" /><path d="M21 7h4v3h-4z" fill="#fff" /></svg>
        </button>
        <Task
          className="w-[228px] pl-[15px]"
          icon={
            <svg width="20" height="30" className="mr-[14px]" aria-hidden="true"><path d="M2 0h18v20l2 5H2z" fill="#f4d37a" /><path d="M0 2l6 4v24l-6-5z" fill="#fbe39a" /></svg>
          }
        >
          屏幕截图
        </Task>
        <Task
          underline={false}
          className="w-[89px] pl-[26px]"
          icon={
            <svg width="36" height="34" aria-hidden="true"><path d="M0 10 18 0l18 10v24H0z" fill="#0d63b5" /><path d="M3 10h30v12H3z" fill="#f3f3f3" /><path d="M0 11l18 11L36 11v23H0z" fill="#32b4f0" /><path d="M18 22 36 34H0z" fill="#1a86d8" /></svg>
          }
        />
        <Task
          className="mr-2 w-[228px] pl-[8px]"
          icon={
            <svg width="36" height="36" viewBox="0 0 36 36" className="mr-1 shrink-0" aria-hidden="true">
              <circle cx="18" cy="18" r="18" fill="#1470c8" />
              <path d="M1 13C5-4 34-4 36 17c0 7-8 9-13 6 3-4 1-11-6-11C9 12 5 15 1 20z" fill="#35c1d8" />
              <path d="M27 3c10 6 12 17 4 21-3 1-7 0-8-1 4-5 8-10 4-20z" fill="#4ed474" />
              <path d="M13 19c-2 10 8 14 19 9-6 8-16 10-22 5-5-4-3-12 3-14z" fill="#0b4f9e" />
            </svg>
          }
        >
          我的经验_个人中心...
        </Task>
        <Task className="w-[240px] bg-linear-to-r from-[#5f5350] to-[#42444f] pl-[15px]" icon={<MaxLogo className="mr-1 h-9 w-9 shrink-0" />}>
          无标题 - Autodesk...
        </Task>
        <span className="flex-1" />
      </div>
      <div className="flex items-center text-white">
        <div className="flex w-[148px] flex-col">
          <div className="flex h-[30px] items-center gap-2 text-[22px] leading-[26px]">
            <span className="h-[22px] w-[22px] bg-white text-center text-[19px] leading-[22px] text-black">拼</span>
            <span>中</span>
            <svg width="20" height="18" fill="none" stroke="#fff" strokeWidth="1.500" aria-hidden="true"><path d="M10 1c8 3 9 13-1 16-3 0-6-1-8-3 9 0 12-6 9-13z" /></svg>
            <span className="w-[22px] font-bold">°,</span>
            <span>简</span>
          </div>
          <svg width="24" height="24" viewBox="0 0 26 26" fill="none" stroke="#fff" strokeWidth="1.500" aria-hidden="true"><path d={gearPath} /></svg>
        </div>
        <button aria-label="显示隐藏的图标" className="ml-1"><svg width="18" height="10" fill="none" stroke="#fff" strokeWidth="1.500" aria-hidden="true"><path d="m1 9 8-8 8 8" /></svg></button>
        <span className="ml-[15px]"><CloudMark w={24} h={16} /></span>
        <svg className="ml-3" width="25" height="18" fill="none" stroke="#fff" strokeWidth="1.500" aria-hidden="true"><path d="M7 4h15v12H4v-5M24 7v5M1 3h5v4c0 3-5 3-5 0zM2 3V0M5 3V0M3 9v4" /><path d="M8 6h12v8H8z" fill="#fff" /></svg>
        <svg className="ml-3" width="24" height="20" fill="none" stroke="#fff" strokeWidth="1.500" aria-hidden="true"><path d="M7 2h16v13H4V8M1 1h5v6H1zM13 15v4M8 19h10" /></svg>
        <svg className="ml-3" width="24" height="20" fill="none" stroke="#fff" strokeWidth="1.500" aria-hidden="true"><path d="M1 7h3l5-5v16l-5-5H1zM12 7c2 2 2 4 0 6" /><path d="M15 5c3 3 3 7 0 10M18 2c5 5 5 11 0 16" stroke="#888" /></svg>
        <div className="w-[122px] text-center text-[19px] leading-[27px]">
          <div>17:09</div>
          <div>2020/6/8</div>
        </div>
        <svg className="ml-[18px]" width="32" height="26" fill="#fff" aria-hidden="true"><path d="M0 0l5 6v20H0zM32 0l-5 6v20h5zM7 7l9 12 9-12v19h-4V17l-5 7-5-7v9H7z" /></svg>
        <button aria-label="通知" className="relative mr-[31px] ml-[37px]">
          <svg width="24" height="24" fill="#fff" aria-hidden="true"><path d="M0 0h24v18H12l-4 5v-5H0z" /><path d="M5 5h14M5 9h14M5 13h8" stroke="#111" strokeWidth="1.500" /></svg>
          <span className="absolute top-3 left-3 h-6 w-6 rounded-full border border-[#999] bg-[#2a2a2a] text-center text-[16px] leading-[22px] font-bold">2</span>
        </button>
        <span className="mr-[6px] h-full w-px bg-[#777]" />
      </div>
    </footer>
  );
}

function Toast() {
  return (
    <div role="status" className="absolute right-6 bottom-[78px] flex h-[150px] w-[546px] bg-[#212221] font-['Noto_Sans','Noto_Sans_CJK_SC',sans-serif] font-normal">
      <div className="mt-12 ml-6 w-[96px]"><CloudMark w={72} h={47} /></div>
      <div className="pt-[30px] text-[22px] leading-[31px] whitespace-nowrap text-[#9c9c9c]">
        <div className="font-bold text-white">屏幕快照已保存</div>
        <div>屏幕快照已添加到你的 OneDrive。</div>
        <div className="text-[19px] leading-8">OneDrive</div>
      </div>
    </div>
  );
}

function Watermark() {
  return (
    <div className="pointer-events-none absolute right-[112px] bottom-[38px] w-[392px] text-white" aria-hidden="true">
      <div className="flex h-[124px] items-end opacity-70">
        <span className="w-[130px] font-['Liberation_Sans',sans-serif] text-[80px] leading-[78px] font-bold">Bai</span>
        <svg width="118" height="124" viewBox="-4 0 118 124" className="-ml-1 shrink-0" fill="#fff">
          <ellipse cx="14" cy="46" rx="13" ry="18" />
          <ellipse cx="43" cy="19" rx="13" ry="18" />
          <ellipse cx="77" cy="22" rx="14" ry="18" transform="rotate(8 77 22)" />
          <ellipse cx="98" cy="55" rx="14" ry="18" />
          <path d="M57 48c14 0 17 14 27 23 12 10 22 22 18 36-3 13-15 15-27 14-12-2-24-2-36 0-13 1-25-2-28-14-3-13 5-25 15-35 11-10 17-24 31-24z" />
          <text x="57" y="112" fontSize="52" fontWeight="700" textAnchor="middle" fill="#2a2a2a" fontFamily="Liberation Sans, sans-serif">du</text>
        </svg>
        <span className="font-['Noto_Sans_CJK_SC',sans-serif] text-[66px] leading-[82px] font-black whitespace-nowrap">经验</span>
      </div>
      <div className="mt-1 text-center font-['Noto_Sans',sans-serif] text-[44px] leading-[60px] font-medium opacity-80">jingyan.baidu.com</div>
    </div>
  );
}

export default function App() {
  return (
    <div className="relative flex h-screen flex-col overflow-hidden bg-[#444] font-['Noto_Sans_CJK_SC',sans-serif] text-[18px] font-light text-[#ddd]">
      <TitleBar />
      <MenuBar />
      <ToolBar />
      <Ribbon />
      <main className="flex min-h-0 flex-1">
        <Dock />
        <div className="grid min-w-0 flex-1 grid-cols-2 grid-rows-2 gap-x-1 gap-y-[3px]">
          <Viewport active kind="top" labels={["+", "顶 ", "标准 ", "线框 "]} cube={<TopCube />} />
          <Viewport kind="front" labels={["+", "前 ", "标准 ", "线框 "]} cube={<SideCube label="前" />} />
          <Viewport kind="left" labels={["+", "左 ", "标准 ", "线框 "]} cube={<SideCube label="左" />} />
          <Viewport persp kind="persp" labels={["+", "透视 ", "标准 ", "默认明暗处理 "]} cube={<PerspCube />} />
        </div>
        <CommandPanel />
      </main>
      <TimeLine />
      <StatusBar />
      <TaskBar />
      <Toast />
      <Watermark />
    </div>
  );
}
